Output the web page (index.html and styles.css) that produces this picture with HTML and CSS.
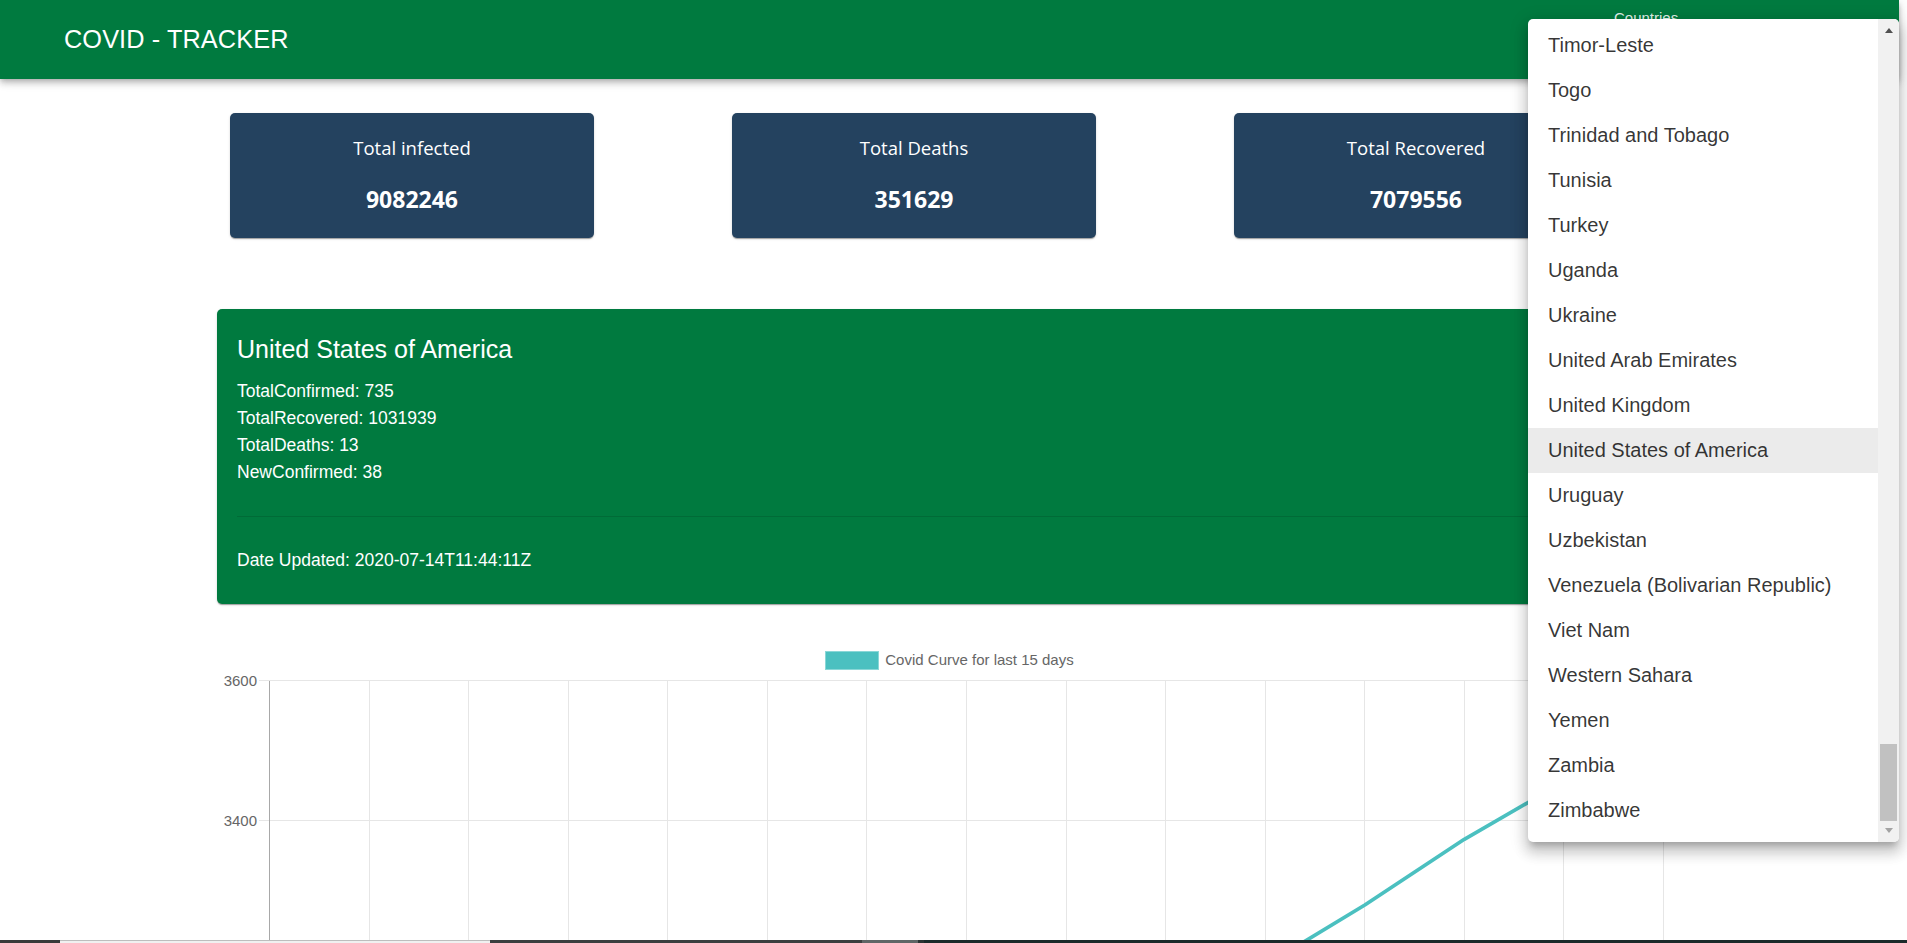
FILE: index.html
```html
<!DOCTYPE html>
<html lang="en">
<head>
<meta charset="utf-8">
<title>COVID - TRACKER</title>
<link rel="stylesheet" href="styles.css">
</head>
<body>
<header class="appbar">
  <div class="title">COVID - TRACKER</div>
  <div class="select"><span class="select-label">Countries</span></div>
</header>

<main class="page">
  <section class="stats">
    <div class="stat">
      <div class="stat-title">Total infected</div>
      <div class="stat-value">9082246</div>
    </div>
    <div class="stat">
      <div class="stat-title">Total Deaths</div>
      <div class="stat-value">351629</div>
    </div>
    <div class="stat">
      <div class="stat-title">Total Recovered</div>
      <div class="stat-value">7079556</div>
    </div>
  </section>

  <section class="country-card">
    <h2 class="country-name">United States of America</h2>
    <div class="country-lines">
      <p>TotalConfirmed: 735</p>
      <p>TotalRecovered: 1031939</p>
      <p>TotalDeaths: 13</p>
      <p>NewConfirmed: 38</p>
    </div>
    <hr class="divider">
    <p class="country-date">Date Updated: 2020-07-14T11:44:11Z</p>
  </section>

  <section class="chart">
    <div class="legend"><span class="legend-box"></span><span class="legend-text">Covid Curve for last 15 days</span></div>
    <svg class="plot" width="1465" height="280" viewBox="0 0 1465 280">
      <g class="grid" shape-rendering="crispEdges">
        <line x1="152.1" y1="10.5" x2="152.1" y2="280"/>
        <line x1="251.6" y1="10.5" x2="251.6" y2="280"/>
        <line x1="351.2" y1="10.5" x2="351.2" y2="280"/>
        <line x1="450.8" y1="10.5" x2="450.8" y2="280"/>
        <line x1="550.3" y1="10.5" x2="550.3" y2="280"/>
        <line x1="649.9" y1="10.5" x2="649.9" y2="280"/>
        <line x1="749.5" y1="10.5" x2="749.5" y2="280"/>
        <line x1="849.1" y1="10.5" x2="849.1" y2="280"/>
        <line x1="948.6" y1="10.5" x2="948.6" y2="280"/>
        <line x1="1048.2" y1="10.5" x2="1048.2" y2="280"/>
        <line x1="1147.8" y1="10.5" x2="1147.8" y2="280"/>
        <line x1="1247.3" y1="10.5" x2="1247.3" y2="280"/>
        <line x1="1346.9" y1="10.5" x2="1346.9" y2="280"/>
        <line x1="1446.5" y1="10.5" x2="1446.5" y2="280"/>
        <line x1="42" y1="10.5" x2="1446.5" y2="10.5"/>
        <line x1="42" y1="150.5" x2="1446.5" y2="150.5"/>
      </g>
      <line class="axis" shape-rendering="crispEdges" x1="52.5" y1="10.5" x2="52.5" y2="280"/>
      <text class="tick" x="40" y="10">3600</text>
      <text class="tick" x="40" y="150">3400</text>
      <polyline class="curve" points="849.1,430 948.6,360 1048.2,295.3 1147.8,235 1247.3,169.3 1346.9,111.8 1446.5,55"/>
    </svg>
  </section>
</main>

<div class="menu">
  <ul class="menu-list">
    <li class="menu-item">Timor-Leste</li>
    <li class="menu-item">Togo</li>
    <li class="menu-item">Trinidad and Tobago</li>
    <li class="menu-item">Tunisia</li>
    <li class="menu-item">Turkey</li>
    <li class="menu-item">Uganda</li>
    <li class="menu-item">Ukraine</li>
    <li class="menu-item">United Arab Emirates</li>
    <li class="menu-item">United Kingdom</li>
    <li class="menu-item selected">United States of America</li>
    <li class="menu-item">Uruguay</li>
    <li class="menu-item">Uzbekistan</li>
    <li class="menu-item">Venezuela (Bolivarian Republic)</li>
    <li class="menu-item">Viet Nam</li>
    <li class="menu-item">Western Sahara</li>
    <li class="menu-item">Yemen</li>
    <li class="menu-item">Zambia</li>
    <li class="menu-item">Zimbabwe</li>
  </ul>
  <div class="scrollbar">
    <div class="sb-btn sb-btn-up"><span class="arrow-up"></span></div>
    <div class="sb-track"><div class="sb-thumb"></div></div>
    <div class="sb-btn sb-btn-down"><span class="arrow-down"></span></div>
  </div>
</div>

<div class="taskbar">
  <span class="tb tb-a"></span>
  <span class="tb tb-b"></span>
  <span class="tb tb-c"></span>
  <span class="tb tb-d"></span>
  <span class="tb tb-e"></span>
  <span class="tb tb-f"></span>
</div>
</body>
</html>
```

FILE: styles.css
```css
html, body {
  margin: 0;
  height: 943px;
  overflow: hidden;
  background: #ffffff;
}

body {
  padding-right: 8px;
  font-family: "Liberation Sans", Arial, sans-serif;
  position: relative;
}

/* ---------- App bar ---------- */
.appbar {
  position: relative;
  z-index: 2;
  display: flex;
  align-items: center;
  height: 79px;
  padding-left: 64px;
  background: #007a3f;
  color: #ffffff;
  box-shadow: 0 2.5px 5px -1.25px rgba(0, 0, 0, 0.2),
              0 5px 6px 0 rgba(0, 0, 0, 0.14),
              0 1.25px 12.5px 0 rgba(0, 0, 0, 0.12);
}

.title {
  font-size: 25.3px;
  font-weight: 400;
  letter-spacing: 0.1px;
}

.select {
  margin-left: auto;
  width: 285px;
  align-self: flex-start;
  padding-top: 10px;
  font-size: 15px;
  line-height: 15px;
  color: rgba(255, 255, 255, 0.9);
}

/* ---------- Page ---------- */
.page {
  width: 1465px;
  margin: 0 auto;
}

.stats {
  display: flex;
  gap: 138px;
  padding-left: 13px;
  margin-top: 34px;
}

.stat {
  width: 364px;
  height: 125px;
  box-sizing: border-box;
  padding-top: 22px;
  background: #24425f;
  border-radius: 5px;
  box-shadow: 0 2px 1px -1px rgba(0, 0, 0, 0.2),
              0 1px 1px 0 rgba(0, 0, 0, 0.14),
              0 1px 3px 0 rgba(0, 0, 0, 0.12);
  color: #ffffff;
  text-align: center;
  font-family: "Open Sans", "Noto Sans", sans-serif;
}

.stat-title {
  font-size: 18.5px;
  line-height: 26px;
}

.stat-value {
  margin-top: 23px;
  font-size: 23px;
  font-weight: 700;
  line-height: 30px;
}

/* ---------- Country card ---------- */
.country-card {
  margin-top: 71px;
  height: 295px;
  box-sizing: border-box;
  padding: 24px 20px 0;
  background: #007a3f;
  border-radius: 5px;
  box-shadow: 0 2px 1px -1px rgba(0, 0, 0, 0.2),
              0 1px 1px 0 rgba(0, 0, 0, 0.14),
              0 1px 3px 0 rgba(0, 0, 0, 0.12);
  color: #ffffff;
}

.country-name {
  margin: 0;
  font-size: 25px;
  font-weight: 400;
  line-height: 33.35px;
}

.country-lines {
  margin-top: 11.8px;
  font-size: 17.5px;
  line-height: 27px;
}

.country-lines p {
  margin: 0;
}

.divider {
  margin: 30px 0 30px;
  border: 0;
  height: 1px;
  background: rgba(0, 0, 0, 0.12);
}

.country-date {
  margin: 0;
  font-size: 17.5px;
  line-height: 27px;
}

/* ---------- Chart ---------- */
.chart {
  margin-top: 47px;
}

.legend {
  display: flex;
  justify-content: center;
  align-items: center;
  gap: 6px;
  height: 19px;
  color: #666666;
  font-size: 15px;
}

.legend-box {
  width: 52px;
  height: 17px;
  background: #4bc0c0;
  border: 1px solid #8ad7d7;
}

.legend-text {
  line-height: 15px;
  margin-top: -3px;
}

.plot {
  display: block;
}

.grid line {
  stroke: #e6e6e6;
  stroke-width: 1;
}

.axis {
  stroke: #a8a8a8;
  stroke-width: 1;
}

.tick {
  fill: #666666;
  font-family: "Liberation Sans", Arial, sans-serif;
  font-size: 15px;
  text-anchor: end;
  dominant-baseline: central;
}

.curve {
  fill: none;
  stroke: #4bc0c0;
  stroke-width: 3.75;
  stroke-linejoin: round;
}

/* ---------- Dropdown menu (overlay) ---------- */
.menu {
  position: absolute;
  z-index: 5;
  left: 1528px;
  top: 19px;
  width: 371px;
  height: 823px;
  display: flex;
  overflow: hidden;
  background: #ffffff;
  border-radius: 5px;
  box-shadow: 0 6.25px 6.25px -3.75px rgba(0, 0, 0, 0.2),
              0 10px 12.5px 1.25px rgba(0, 0, 0, 0.14),
              0 3.75px 17.5px 2.5px rgba(0, 0, 0, 0.12);
}

.menu-list {
  flex: 1;
  list-style: none;
  margin: 0;
  padding: 4px 0 0;
  font-family: "Liberation Sans", Arial, sans-serif;
  font-size: 20px;
  color: rgba(0, 0, 0, 0.8);
}

.menu-item {
  height: 45px;
  line-height: 45px;
  padding-left: 20px;
  white-space: nowrap;
}

.menu-item.selected {
  background: rgba(0, 0, 0, 0.08);
}

.scrollbar {
  width: 21px;
  display: flex;
  flex-direction: column;
  background: #f1f1f1;
}

.sb-btn {
  height: 21px;
  box-sizing: border-box;
  display: flex;
  align-items: center;
  justify-content: center;
}

.sb-btn-up {
  padding-top: 2px;
}

.sb-btn-down {
  padding-bottom: 2px;
}

.arrow-up {
  width: 0;
  height: 0;
  border-left: 4.5px solid transparent;
  border-right: 4.5px solid transparent;
  border-bottom: 5px solid #505050;
}

.arrow-down {
  width: 0;
  height: 0;
  border-left: 4.5px solid transparent;
  border-right: 4.5px solid transparent;
  border-top: 5px solid #a3a3a3;
}

.sb-track {
  flex: 1;
  display: flex;
  flex-direction: column;
  justify-content: flex-end;
  padding: 0 2px;
}

.sb-thumb {
  height: 77px;
  background: #c1c1c1;
}

/* ---------- Bottom strip of the screen ---------- */
.taskbar {
  position: fixed;
  z-index: 10;
  left: 0;
  right: 0;
  bottom: 0;
  height: 3px;
  display: flex;
}

.tb {
  display: block;
  height: 3px;
}

.tb-a { width: 60px; background: #3a3a3a; }
.tb-b { width: 430px; background: #f0f0f0; box-shadow: inset 0 1px 0 #bdbdbd; }
.tb-c { width: 372px; background: #3b3f3f; }
.tb-d { width: 56px; background: #5f6666; }
.tb-e { width: 6px; background: #2b3333; }
.tb-f { flex: 1; background: #1b2a2a; }
```
